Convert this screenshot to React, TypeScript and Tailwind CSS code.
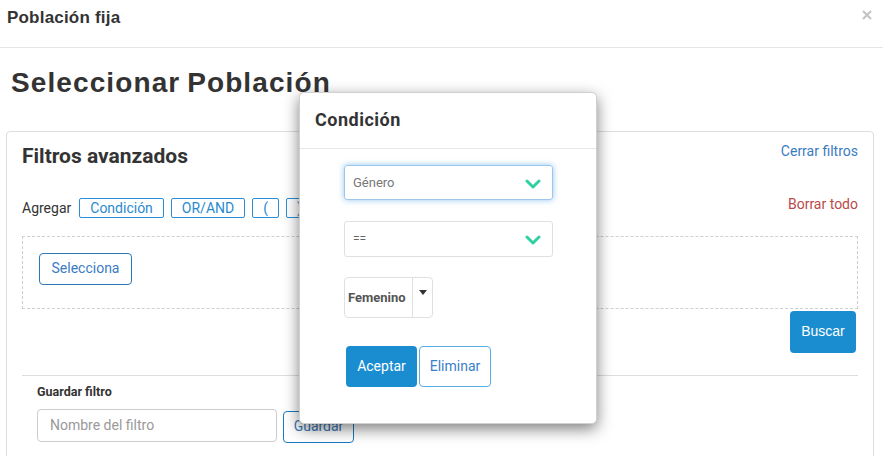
import React from 'react';

const Chevron = () => (
  <svg width="16" height="10" viewBox="0 0 16 10" fill="none" className="absolute left-[180px] top-1/2 -translate-y-1/2 mt-[1px]">
    <path d="M2 2 8 8 14 2" stroke="#2fd1a1" strokeWidth="3" strokeLinecap="round" strokeLinejoin="round" />
  </svg>
);

const ConditionModal: React.FC = () => (
  <div className="absolute left-[299px] top-[92px] w-[298px] h-[332px] bg-white rounded-[5px] border border-[#d0d0d0] shadow-[0_5px_15px_rgba(0,0,0,0.5)] font-['Roboto',sans-serif]">
    <div className="h-[56px] border-b border-[#e8e8e8] pl-[15px] pt-[17px]">
      <h4 className="text-[18px] leading-[20px] font-bold text-[#333] tracking-[0.5px]">Condición</h4>
    </div>
    <div className="pl-[44px] pt-[16px]">
      <div className="relative w-[209px] h-[35px] rounded-[3px] border border-[#9cc6ea] shadow-[0_0_6px_rgba(102,175,233,0.7)] flex items-center pl-[8px]">
        <span className="text-[13px] text-[#777]">Género</span>
        <Chevron />
      </div>
      <div className="relative mt-[21px] w-[209px] h-[36px] rounded-[3px] border border-[#e0e0e0] flex items-center pl-[8px]">
        <span className="text-[12px] text-[#666]">==</span>
        <Chevron />
      </div>
      <div className="mt-[20px] w-[89px] h-[41px] rounded-[4px] border border-[#e0e0e0] flex">
        <div className="w-[68px] border-r border-[#e0e0e0] flex items-center pl-[3px]">
          <span className="text-[13px] font-bold text-[#555]">Femenino</span>
        </div>
        <div className="flex-1 flex justify-center pt-[12px]">
          <svg width="8" height="5" viewBox="0 0 8 5">
            <path d="M0 0h8L4 5z" fill="#333" />
          </svg>
        </div>
      </div>
      <div className="mt-[28px] ml-[2px] flex gap-[2px]">
        <button className="w-[71px] h-[41px] rounded-[4px] bg-[#1a8dd1] text-white text-[14px]">Aceptar</button>
        <button className="w-[72px] h-[41px] rounded-[4px] border border-[#5aaee6] bg-white text-[#3a80c8] text-[14px]">Eliminar</button>
      </div>
    </div>
  </div>
);

export default function App() {
  return (
    <div className="relative w-[883px] h-[456px] overflow-hidden bg-white text-[#333] font-['Roboto',sans-serif]">
      <div className="h-[48px] border-b border-[#e5e5e5] flex justify-between items-start pl-[7px] pr-[11px] pt-[8px]">
        <h3 className="text-[17px] leading-[20px] font-bold font-['Liberation_Sans',Arial,sans-serif] text-[#333] tracking-[0.2px]">Población fija</h3>
        <svg width="10" height="10" viewBox="0 0 10 10" className="mt-[2px]">
          <path d="M1 1 9 9M9 1 1 9" stroke="#c4c4c4" strokeWidth="2.2" />
        </svg>
      </div>

      <h1 className="ml-[11px] mt-[19px] text-[28px] leading-[32px] font-bold font-['Liberation_Sans',Arial,sans-serif] text-[#333] tracking-[1.1px] [word-spacing:-2px]">
        Seleccionar Población
      </h1>

      <div className="mt-[32px] ml-[6px] w-[868px] min-h-[400px] border border-[#ddd] rounded-[4px] px-[15px] pt-[9px]">
        <div className="flex justify-between items-start">
          <h2 className="mt-[3px] text-[21px] leading-[24px] font-bold text-[#333]">Filtros avanzados</h2>
          <a className="text-[14px] leading-[20px] text-[#3a7bbf]">Cerrar filtros</a>
        </div>

        <div className="mt-[26px] flex justify-between items-start">
          <div className="mt-[3.5px] flex items-center gap-[7px]">
            <span className="text-[14px] leading-[20px] text-[#333] mr-[1px]">Agregar</span>
            <button className="h-[20px] px-[10px] border border-[#2b8fd6] rounded-[2px] text-[14px] leading-[18px] text-[#2a8ad0]">Condición</button>
            <button className="h-[20px] px-[10px] border border-[#2b8fd6] rounded-[2px] text-[14px] leading-[18px] text-[#2a8ad0]">OR/AND</button>
            <button className="h-[20px] px-[10px] border border-[#2b8fd6] rounded-[2px] text-[14px] leading-[18px] text-[#2a8ad0]">(</button>
            <button className="h-[20px] px-[10px] border border-[#2b8fd6] rounded-[2px] text-[14px] leading-[18px] text-[#2a8ad0]">)</button>
          </div>
          <a className="text-[14px] leading-[20px] text-[#b94a48]">Borrar todo</a>
        </div>

        <div className="mt-[18px] h-[73px] border border-dashed border-[#cfcfcf] p-[16px]">
          <button className="h-[32px] w-[93px] border border-[#2c78b6] rounded-[4px] text-[14px] text-[#3a7cc4]">Selecciona</button>
        </div>

        <div className="mt-[2px] flex justify-end pr-[2px]">
          <button className="w-[66px] h-[42px] rounded-[4px] bg-[#1a8dd1] text-white text-[14px] font-['Liberation_Sans',Arial,sans-serif]">Buscar</button>
        </div>

        <div className="mt-[22px] border-t border-[#ddd]" />

        <div className="pl-[15px] pt-[7px]">
          <label className="block text-[12.5px] leading-[17px] font-bold text-[#333]">Guardar filtro</label>
          <div className="mt-[9px] flex items-start gap-[6px]">
            <input
              placeholder="Nombre del filtro"
              className="w-[240px] h-[33px] border border-[#ccc] rounded-[4px] px-[12px] text-[14px] placeholder:text-[#999] outline-none"
            />
            <button className="mt-[2px] w-[71px] h-[32px] border border-[#1a7ac0] rounded-[4px] text-[14px] text-[#3a78b8]">Guardar</button>
          </div>
        </div>
      </div>

      <ConditionModal />
    </div>
  );
}
